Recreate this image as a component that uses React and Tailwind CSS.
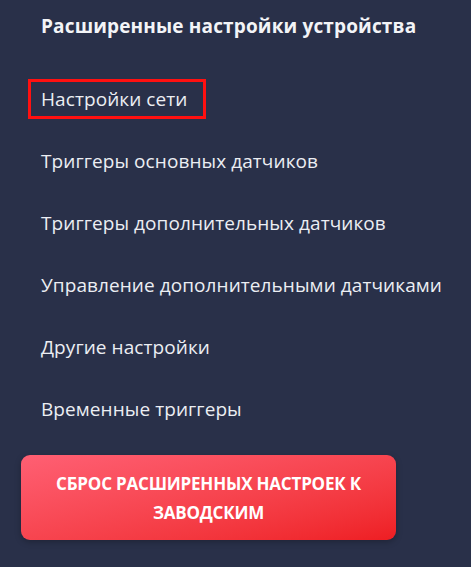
export default function App() {
  const items = [
    'Настройки сети',
    'Триггеры основных датчиков',
    'Триггеры дополнительных датчиков',
    'Управление дополнительными датчиками',
    'Другие настройки',
    'Временные триггеры',
  ]

  return (
    <main
      className="min-h-screen bg-[#293049] text-white pt-[14px]"
      style={{ fontFamily: '"Open Sans", "Noto Sans", sans-serif' }}
    >
      <h2 className="pl-[41px] text-[19px] font-bold leading-[24px] tracking-[0.15px] text-[#f3f4f7]">
        Расширенные настройки устройства
      </h2>

      <ul className="mt-[41px] flex flex-col gap-[22px] pl-[28px]">
        {items.map((item, i) => (
          <li key={item}>
            <span
              className={
                'inline-block border-[3px] pl-[10px] pr-[15px] py-[5px] text-[19px] leading-[24px] tracking-[0.08px] text-[#eceef3] ' +
                (i === 0 ? 'border-[#ff1010]' : 'border-transparent')
              }
            >
              {item}
            </span>
          </li>
        ))}
      </ul>

      <div className="mt-[26px] pl-[21px]">
        <button className="w-[375px] h-[85px] rounded-[9px] bg-gradient-to-br from-[#ff5f73] to-[#ee1d22] px-6 text-[17px] font-bold leading-[29px] uppercase text-white tracking-[-0.2px] shadow-[0_2px_6px_rgba(0,0,0,0.25)]">
          Сброс расширенных настроек к заводским
        </button>
      </div>
    </main>
  )
}
